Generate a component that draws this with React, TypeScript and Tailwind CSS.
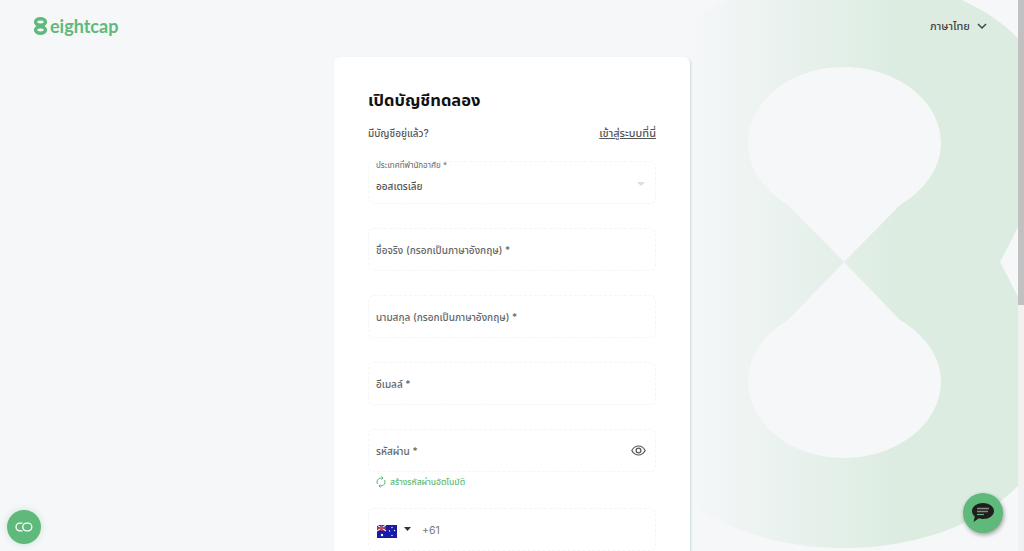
const thai = "font-['Inter','Noto_Sans','Noto_Sans_Thai','Liberation_Sans',sans-serif]";

function EightBackground() {
  return (
    <svg className="absolute inset-0" width="1024" height="551" viewBox="0 0 1024 551" fill="none">
      <defs>
        <linearGradient id="fade" x1="690" y1="0" x2="900" y2="0" gradientUnits="userSpaceOnUse">
          <stop offset="0" stopColor="#dcece1" stopOpacity="0" />
          <stop offset="1" stopColor="#dcece1" />
        </linearGradient>
      </defs>
      <path
        fill="url(#fade)"
        fillRule="evenodd"
        d="M844,-24 C958,-24 1050,36 1050,110 C1050,165 1025,215 1000,262 C1025,309 1050,359 1050,414 C1050,488 958,548 844,548 C730,548 638,488 638,414 C638,359 663,309 688,262 C663,215 638,165 638,110 C638,36 730,-24 844,-24 Z
        M844,67 C897,67 941,101 941,143 C941,170 922,192 900,205 L844,262 L788,205 C766,192 748,170 748,143 C748,101 791,67 844,67 Z
        M844,262 L900,320 C922,333 941,355 941,381 C941,424 897,458 844,458 C791,458 748,424 748,381 C748,355 766,333 788,320 Z"
      />
    </svg>
  );
}

function Logo() {
  return (
    <div className="flex items-center gap-[2px]">
      <svg width="15" height="18" viewBox="0 0 15 18" fill="none" stroke="#5fb97a" strokeWidth="3.5">
        <ellipse cx="7.5" cy="5" rx="4.9" ry="3.2" />
        <ellipse cx="7.5" cy="13" rx="4.9" ry="3.2" />
      </svg>
      <span className="font-['Lato',sans-serif] text-[18px] font-bold leading-none text-[#5fb97a]">eightcap</span>
    </div>
  );
}

function Field({ label, children }: { label?: string; children?: React.ReactNode }) {
  return (
    <div className="flex h-[43px] items-center justify-between rounded-md border border-dashed border-[#f5f5f5] pl-[7px] pr-2">
      {label && <span className="pt-[2px] text-[10px] font-medium text-[#666]">{label}</span>}
      {children}
    </div>
  );
}

function Flag() {
  return (
    <svg width="20" height="13" viewBox="0 0 20 13">
      <rect width="20" height="13" fill="#1a1aa8" />
      <rect width="9" height="6" fill="#2a2a90" />
      <path d="M0 0L9 6M9 0L0 6" stroke="#eee" strokeWidth="1.2" />
      <path d="M4.5 0V6M0 3H9" stroke="#d33" strokeWidth="1.6" />
      <circle cx="5" cy="10" r="1.2" fill="#fff" />
      <circle cx="15" cy="2.5" r=".7" fill="#fff" />
      <circle cx="12.5" cy="6" r=".7" fill="#fff" />
      <circle cx="17.5" cy="5.5" r=".7" fill="#fff" />
      <circle cx="15" cy="10.5" r=".7" fill="#fff" />
    </svg>
  );
}

export default function App() {
  return (
    <div className={`relative h-[551px] w-[1024px] overflow-hidden bg-[#f5f7f9] ${thai}`}>
      <EightBackground />

      <div className="relative flex flex-col">
        <header className="flex h-[57px] items-center justify-between pl-[33px] pr-[37px] pb-[5px]">
          <Logo />
          <div className="flex items-center gap-[7px] text-[11px] font-medium text-[#444]">
            <span>ภาษาไทย</span>
            <svg width="10" height="7" viewBox="0 0 10 7" fill="none" stroke="#444" strokeWidth="1.5">
              <path d="M1 1L5 5L9 1" />
            </svg>
          </div>
        </header>

        <main className="ml-[334px] h-[520px] w-[356px] rounded-md bg-white px-[34px] pt-[29px] shadow-[1px_1px_2px_rgba(120,170,140,0.35)]">
          <h1 className="text-[16.5px] font-bold leading-7 text-[#111]">เปิดบัญชีทดลอง</h1>
          <div className="mt-[12px] flex h-[15px] items-center justify-between font-medium text-[#555]">
            <span className="text-[10px]">มีบัญชีอยู่แล้ว?</span>
            <a className="text-[11px] underline">เข้าสู่ระบบที่นี่</a>
          </div>

          <div className="relative mt-[20px]">
            <div className="absolute left-[8px] top-[-2px] text-[8px] leading-3 text-[#666]">ประเทศที่พำนักอาศัย *</div>
            <div className="flex h-[43px] items-center justify-between rounded-md border border-dashed border-[#f5f5f5] pl-[7px] pr-2 pt-[8px]">
              <span className="text-[10px] font-medium text-[#555]">ออสเตรเลีย</span>
              <svg width="8" height="4" viewBox="0 0 8 4" className="mr-[2px] mb-[6px]">
                <path d="M0 0H8L4 4Z" fill="#ddd" />
              </svg>
            </div>
          </div>

          <div className="mt-[24px] flex flex-col gap-[24px]">
            <Field label="ชื่อจริง (กรอกเป็นภาษาอังกฤษ) *" />
            <Field label="นามสกุล (กรอกเป็นภาษาอังกฤษ) *" />
            <Field label="อีเมลล์ *" />
          </div>

          <div className="mt-[24px]">
            <Field label="รหัสผ่าน *">
              <svg width="15" height="11" viewBox="0 0 15 11" fill="none" stroke="#555" strokeWidth="1.2" className="mr-[1px]">
                <path d="M.8 5.5C2.4 2.6 4.7 1 7.5 1s5.1 1.6 6.7 4.5C12.6 8.4 10.3 10 7.5 10S2.4 8.4.8 5.5Z" />
                <circle cx="7.5" cy="5.5" r="2.4" />
              </svg>
            </Field>
            <div className="mt-[4px] flex items-center gap-[4px] pl-[8px] text-[8.5px] font-medium text-[#5fb97a]">
              <svg width="10" height="12" viewBox="0 0 10 12" fill="none" stroke="#5fb97a" strokeWidth="1">
                <path d="M1.5 8A4 4 0 0 1 5 2H6.5M8.5 4A4 4 0 0 1 5 10H3.5" />
                <path d="M5.5 .5L7 2L5.5 3.5M4.5 8.5L3 10L4.5 11.5" />
              </svg>
              <span>สร้างรหัสผ่านอัตโนมัติ</span>
            </div>
          </div>

          <div className="mt-[19px] flex h-[43px] items-center rounded-md border border-dashed border-[#f5f5f5] px-2 pt-[4px]">
            <Flag />
            <svg width="7" height="4" viewBox="0 0 7 4" className="ml-[7px] mb-[4px]">
              <path d="M0 0H7L3.5 4Z" fill="#333" />
            </svg>
            <span className="ml-[11px] text-[10.5px] text-[#777]">+61</span>
          </div>
        </main>
      </div>

      <button className="absolute left-[7px] top-[510px] flex h-[34px] w-[34px] items-center justify-center rounded-full bg-[#5fb97a] shadow-[0_0_6px_rgba(91,183,116,0.3)]">
        <svg width="18" height="10" viewBox="0 0 18 10" fill="none" stroke="#fff" strokeWidth="1.3">
          <path d="M7.5 1.2H4.8a3.8 3.8 0 0 0 0 7.6H7.5" />
          <rect x="7.8" y="1.2" width="9" height="7.6" rx="3.8" />
        </svg>
      </button>

      <button className="absolute left-[963px] top-[493px] flex h-[40px] w-[40px] items-center justify-center rounded-full bg-[#5fb97a] shadow-[1px_2px_4px_rgba(0,0,0,0.35)]">
        <svg width="22" height="20" viewBox="0 0 22 20">
          <path d="M11 0C17 0 22 3.5 22 8S17 16 11 16C9.5 16 8 15.8 6.8 15.3L1.5 19L2.8 13.4C1 12 0 10.1 0 8 0 3.5 5 0 11 0Z" fill="#1e1e1e" />
          <path d="M5 5.5H17" stroke="#888" strokeWidth="1.5" />
          <path d="M5 8.5H16" stroke="#888" strokeWidth="1.5" />
          <path d="M5 11.5H12" stroke="#5fb97a" strokeWidth="1.2" />
        </svg>
      </button>

      <div className="absolute right-0 top-0 h-[551px] w-[6px] bg-[#f1f1f1]">
        <div className="h-[305px] w-full bg-[#c1c1c1]" />
      </div>
    </div>
  );
}
